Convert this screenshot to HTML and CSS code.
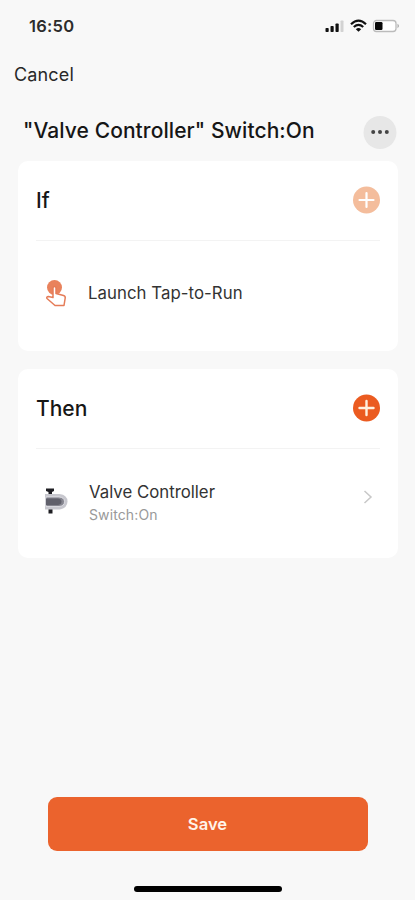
FILE: index.html
```html
<!DOCTYPE html>
<html lang="en">
<head>
<meta charset="utf-8">
<title>Valve Controller</title>
<link rel="stylesheet" href="styles.css">
</head>
<body>
<header class="status">
  <span class="time">16:50</span>
  <svg class="status-icons" width="76" height="16" viewBox="0 0 76 16">
    <g fill="#111"><rect x="0.500" y="10" width="3.200" height="4" rx=".8"/><rect x="5.500" y="8" width="3.200" height="6" rx=".8"/><rect x="10.500" y="5.500" width="3.200" height="8.500" rx=".8"/></g>
    <rect x="15.500" y="2.500" width="3" height="11.500" rx=".8" fill="#d2d2d2"/>
    <g fill="none" stroke="#111" stroke-width="2.200"><path d="M26 6.200Q33.500-.8 41 6.200"/><path d="M28.800 9Q33.500 4.800 38.200 9"/></g>
    <path d="M30.800 11.200Q33.500 9 36.200 11.200L33.500 13.800Z" fill="#111"/>
    <rect x="48.500" y="2.500" width="22.500" height="11" rx="3" fill="#fff" stroke="#bbb" stroke-width="1.300"/>
    <rect x="50" y="4" width="7.500" height="8" rx="1.200" fill="#080808"/>
    <path d="M72.500 5.800Q75.500 8 72.500 10.200Z" fill="#aaa"/>
  </svg>
</header>
<nav class="nav"><span class="cancel">Cancel</span></nav>
<div class="heading">
  <h1 class="title">"Valve Controller" Switch:On</h1>
  <svg class="more" width="34" height="34" viewBox="0 0 34 34"><circle cx="17" cy="16.500" r="16.500" fill="#e7e7e7"/><g fill="#444"><circle cx="10.200" cy="16" r="2"/><circle cx="17" cy="16" r="2"/><circle cx="23.800" cy="16" r="2"/></g></svg>
</div>
<main class="cards">
  <section class="card">
    <div class="card-head">
      <h2 class="label">If</h2>
      <svg class="add" width="28" height="28" viewBox="0 0 28 28"><circle cx="14.500" cy="14" r="13.500" fill="#f4bd9c"/><path d="M7.500 14H21.500M14.500 7V21" stroke="#fff" stroke-width="2.200" stroke-linecap="round"/></svg>
    </div>
    <div class="row">
      <svg class="icon" width="26" height="30" viewBox="0 0 26 30">
        <circle cx="11.500" cy="9.500" r="7.500" fill="#e9825c"/>
        <path d="M10 19.500V10Q10 8.500 11.500 8.500T13 10V15.500L20.500 17.500Q22.500 18 22.200 20L21 27.500H12L4 20.500Q3 18.800 5.500 18.500Z" fill="#fff" stroke="#e57c58" stroke-width="1.500" stroke-linejoin="round"/>
      </svg>
      <span class="name tap">Launch Tap-to-Run</span>
    </div>
  </section>
  <section class="card">
    <div class="card-head">
      <h2 class="label">Then</h2>
      <svg class="add" width="28" height="28" viewBox="0 0 28 28"><circle cx="14.500" cy="14" r="13.500" fill="#eb5b20"/><path d="M7.500 14H21.500M14.500 7V21" stroke="#fff1df" stroke-width="2.400" stroke-linecap="round"/></svg>
    </div>
    <div class="row device">
      <svg class="icon" width="26" height="30" viewBox="0 0 26 30">
        <path d="M3 2.500H11V5L9 6V10H5.500V6L3 5ZM5.500 22H9.500V27.500H5.500Z" fill="#1e1e23"/>
        <path d="M2 8H16.500Q24.500 9 24.500 15.500T16.500 23.500H2Z" fill="#c7c7ce"/>
        <path d="M3 11H16Q21.500 11.500 21.500 15.700T16 20.500H3Z" fill="#85858f" stroke="#eeeef2" stroke-width=".7"/>
        <path d="M3 12.500H15Q18.500 13 18.500 15.700T15 19H3Z" fill="#60606b"/>
      </svg>
      <div class="texts"><span class="name valve">Valve Controller</span><span class="sub">Switch:On</span></div>
      <svg class="chevron" width="10" height="16" viewBox="0 0 10 16"><path d="M1.500 2L8 8L1.500 14" fill="none" stroke="#c8c8c8" stroke-width="1.500"/></svg>
    </div>
  </section>
</main>
<footer class="footer">
  <button class="save">Save</button>
  <div class="home"></div>
</footer>
</body>
</html>
```

FILE: styles.css
```css
* { box-sizing: border-box; }
body {
  margin: 0;
  width: 415px;
  height: 900px;
  display: flex;
  flex-direction: column;
  background: #f8f8f8;
  color: #161616;
  font-family: Inter, "Liberation Sans", sans-serif;
  overflow: hidden;
}
h1, h2 { margin: 0; font-weight: 500; }
svg { display: block; flex: none; }
span, h1, h2 { white-space: nowrap; }
.status {
  height: 52px;
  padding: 0 14px 0 29px;
  display: flex;
  align-items: center;
  justify-content: space-between;
}
.time { font-size: 16.5px; font-weight: 600; letter-spacing: .25px; color: #2c2c2c; }
.nav { height: 46px; padding: 0 0 2px 14px; display: flex; align-items: center; }
.cancel { font-size: 18px; letter-spacing: .15px; color: #282828; }
.heading {
  height: 63px;
  padding: 6px 18px 0 23px;
  display: flex;
  align-items: center;
  justify-content: space-between;
}
.title { font-size: 21px; letter-spacing: .08px; margin-top: -5px; }
.cards { padding: 0 17px 0 18px; display: flex; flex-direction: column; gap: 18px; }
.card { height: 190px; padding: 0 18px; background: #fff; border-radius: 10px; }
.card + .card { height: 189px; }
.card-head {
  height: 80px;
  border-bottom: 1px solid #f3f3f3;
  display: flex;
  align-items: center;
  justify-content: space-between;
}
.add { margin-bottom: 2px; }
.label { font-size: 21px; }
.row { height: 104px; padding-left: 7px; display: flex; align-items: center; }
.icon { margin-right: 19px; }
.name { font-size: 16.8px; line-height: 20px; color: #333; }
.tap { letter-spacing: .05px; }
.device { padding-right: 7px; }
.texts { flex: 1; display: flex; flex-direction: column; gap: 4px; margin: 3px 0 0 1px; }
.sub { font-size: 14px; line-height: 18px; letter-spacing: .12px; color: #999; }
.chevron { margin-bottom: 8px; }
.footer { margin-top: auto; padding-bottom: 8px; display: flex; flex-direction: column; align-items: center; gap: 35px; }
.save {
  width: 320px;
  height: 54px;
  border: 0;
  border-radius: 9px;
  background: #eb632d;
  color: #fff4ea;
  font: 600 16.6px Inter, sans-serif;
}
.home { width: 148px; height: 6px; border-radius: 3px; background: #000; }
```
